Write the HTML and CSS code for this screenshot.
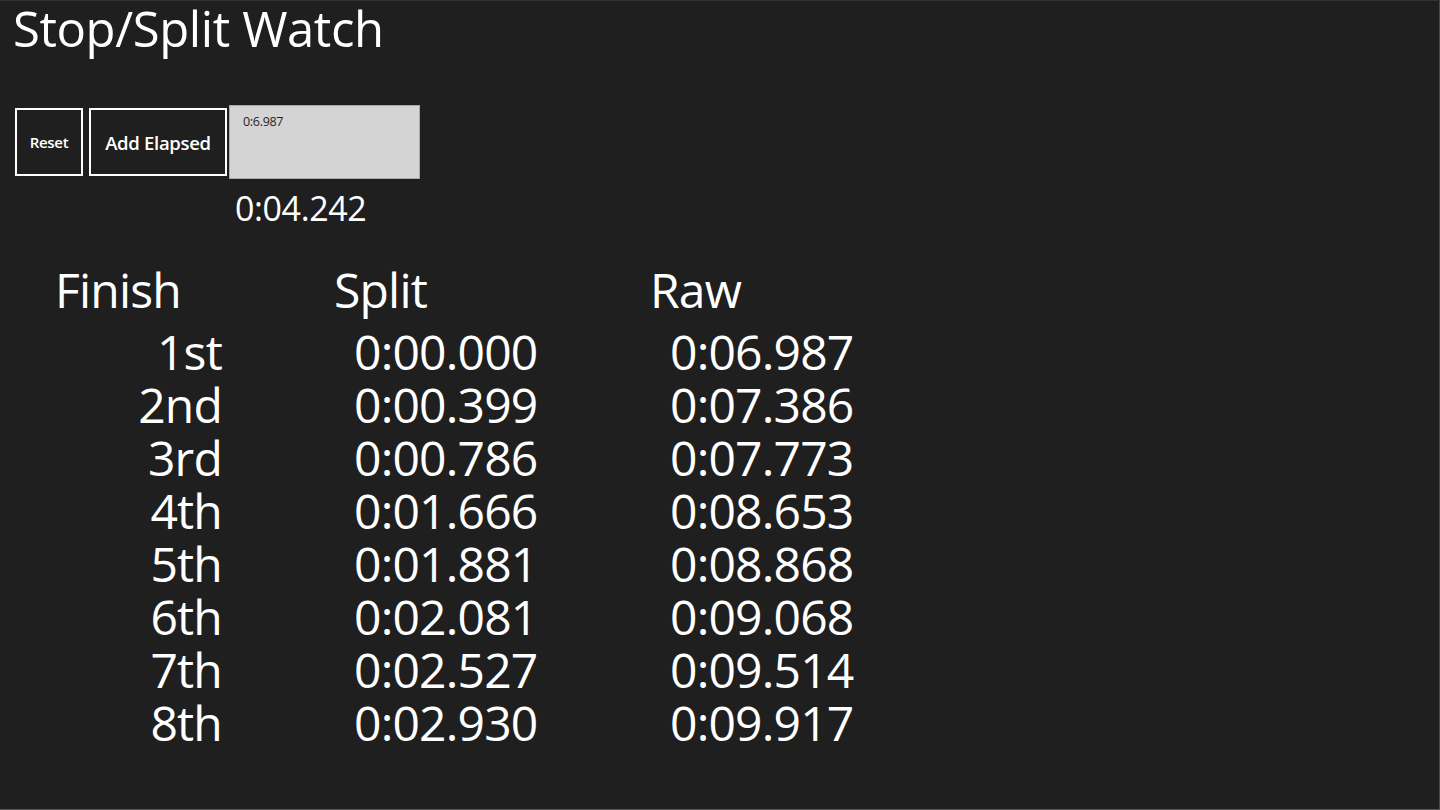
FILE: index.html
```html
<!DOCTYPE html>
<html lang="en">
<head>
<meta charset="utf-8">
<title>Stop/Split Watch</title>
<link rel="stylesheet" href="styles.css">
</head>
<body>
<div class="app">
  <h1 class="title">Stop/Split Watch</h1>
  <div class="controls">
    <button class="btn btn-reset">Reset</button>
    <button class="btn btn-add">Add Elapsed</button>
    <div class="display">0:6.987</div>
    <div class="elapsed">0:04.242</div>
  </div>
  <div class="results">
    <div class="head">Finish</div>
    <div class="head head-shift">Split</div>
    <div class="head head-shift">Raw</div>

    <div class="place">1st</div><div class="time">0:00.000</div><div class="time">0:06.987</div>
    <div class="place">2nd</div><div class="time">0:00.399</div><div class="time">0:07.386</div>
    <div class="place">3rd</div><div class="time">0:00.786</div><div class="time">0:07.773</div>
    <div class="place">4th</div><div class="time">0:01.666</div><div class="time">0:08.653</div>
    <div class="place">5th</div><div class="time">0:01.881</div><div class="time">0:08.868</div>
    <div class="place">6th</div><div class="time">0:02.081</div><div class="time">0:09.068</div>
    <div class="place">7th</div><div class="time">0:02.527</div><div class="time">0:09.514</div>
    <div class="place">8th</div><div class="time">0:02.930</div><div class="time">0:09.917</div>
  </div>
</div>
</body>
</html>
```
FILE: styles.css
```css
html, body {
  margin: 0;
  padding: 0;
  background: #1f1f1f;
}

.app {
  box-sizing: border-box;
  width: 1440px;
  height: 810px;
  background: #1f1f1f;
  color: #ffffff;
  font-family: "Open Sans", "Noto Sans", sans-serif;
  border-top: 1px solid #333333;
  border-right: 1px solid #4a4a4a;
  border-bottom: 1px solid #555555;
  overflow: hidden;
}

.title {
  margin: 0 0 0 13px;
  font-size: 49px;
  font-weight: 400;
  line-height: 54px;
  letter-spacing: -0.4px;
}

.controls {
  display: grid;
  grid-template-columns: 68px 138px 191px;
  column-gap: 6px;
  align-items: center;
  margin: 50px 0 0 15px;
}

.btn {
  box-sizing: border-box;
  height: 68px;
  margin: 0;
  padding: 0;
  background: transparent;
  border: 2px solid #ffffff;
  color: #ffffff;
  font-family: "Open Sans", "Noto Sans", sans-serif;
  font-weight: 600;
  letter-spacing: -0.3px;
}

.btn-reset {
  font-size: 15px;
}

.btn-add {
  font-size: 18.5px;
}

.display {
  box-sizing: border-box;
  width: 191px;
  height: 74px;
  margin-left: -4px;
  padding: 8px 0 0 13px;
  background: #d4d4d4;
  border: 1px solid #a9a9a9;
  color: #1f1f1f;
  font-size: 12.5px;
  line-height: 16px;
  letter-spacing: -0.3px;
}

.elapsed {
  grid-column: 3;
  margin: 9px 0 0 2px;
  font-size: 34px;
  line-height: 40px;
  letter-spacing: -0.4px;
}

.results {
  display: grid;
  grid-template-columns: 167px 184px auto;
  column-gap: 132px;
  margin: 35px 0 0 55px;
  font-size: 48px;
  line-height: 53px;
  letter-spacing: -0.8px;
}

.head {
  margin-bottom: 9px;
}

.head-shift {
  margin-left: -20px;
}

.place {
  text-align: right;
}

.time {
  white-space: nowrap;
}
```
